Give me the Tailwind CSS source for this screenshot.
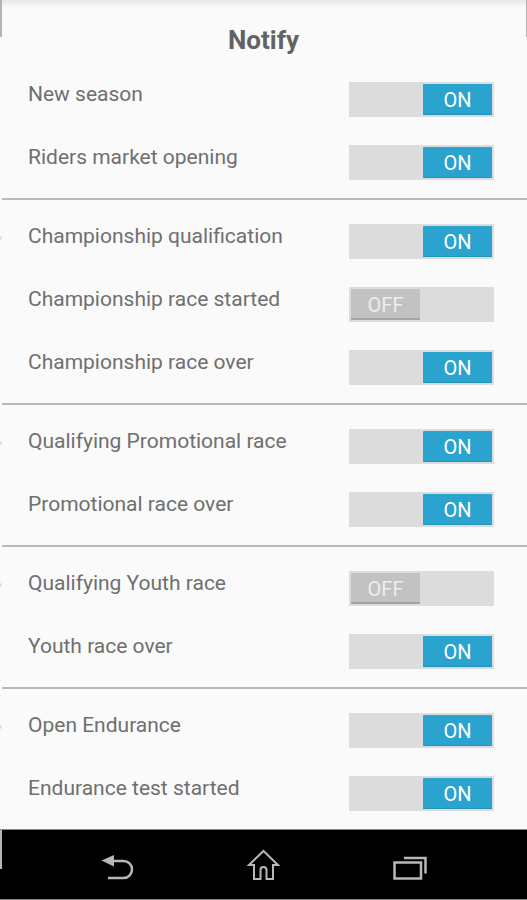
<!DOCTYPE html>
<html lang="en">
<head>
<meta charset="utf-8">
<meta name="viewport" content="width=device-width, initial-scale=1">
<title>Notify</title>
<script src="https://cdn.jsdelivr.net/npm/@tailwindcss/browser@4"></script>
</head>
<body class="bg-[#fafafa]">
<div class="relative flex min-h-screen flex-col bg-[#fafafa] font-['Roboto',sans-serif] text-[#6f6f6f]">
  <!-- device frame edges -->
  <div class="absolute inset-x-0 top-0 h-2 bg-linear-to-b from-[#e8e8e8] to-[#fafafa]"></div>
  <div class="absolute left-0 top-0 h-[37px] w-0.5 bg-[#b4b4b4]"></div>
  <div class="absolute right-0 top-0 h-[37px] w-px bg-[#b4b4b4]"></div>

  <main class="flex-1">
    <h1 class="pt-6 pb-0.5 text-center text-[26px] leading-8 font-bold text-[#636363]">Notify</h1>
    <div id="groups" class="divide-y-2 divide-[#b9b9b9] pl-0.5"></div>
  </main>

  <nav class="relative border-y border-[#8a8a8a] bg-black" aria-label="System">
    <div class="absolute left-0 top-0 h-[39px] w-0.5 bg-[#b4b4b4]"></div>
    <div class="flex h-[69px] items-center justify-center gap-[106px]">
      <button type="button" aria-label="Back" class="size-10">
        <svg viewBox="0 0 40 40" class="size-10" fill="none" stroke="#b8b8b8" stroke-width="2.5"><path d="M15 16H25.500a8.500 8.500 0 0 1 0 17H10"/><path d="M3.500 15.500L16 10V21.500Z" fill="#b8b8b8" stroke="none"/></svg>
      </button>
      <button type="button" aria-label="Home" class="size-10">
        <svg viewBox="0 0 40 40" class="size-10" fill="none" stroke="#b8b8b8" stroke-width="2"><path d="M19.500 6L34 20H29V34H22.500V25a3 3 0 0 0-6 0V34H10V20H5Z"/></svg>
      </button>
      <button type="button" aria-label="Recent apps" class="size-10">
        <svg viewBox="0 0 40 40" class="size-10" fill="none" stroke="#b8b8b8" stroke-width="2.5"><path d="M4.500 17.500H31V33.500H4.500Z"/><path d="M14 13H35.500V28.500"/></svg>
      </button>
    </div>
  </nav>
</div>

<template id="row">
  <label class="group flex cursor-pointer items-start justify-between">
    <span data-text class="text-[21px] leading-6"></span>
    <span class="relative flex h-[35px] w-[145px] shrink-0 bg-[#dcdcdc] p-0.5 text-[20px] text-white group-has-checked:justify-end">
      <input type="checkbox" role="switch" class="absolute inset-0 size-full cursor-pointer appearance-none">
      <span aria-hidden="true" class="hidden w-[69px] items-center justify-center rounded-[1px] border-b border-[#2192b8] bg-[#2aa3cf] pt-0.5 group-has-checked:flex">ON</span>
      <span aria-hidden="true" class="flex w-[69px] items-center justify-center rounded-[1px] border-b-2 border-[#a3a3a3] bg-[#c2c2c2] pt-0.5 text-[#eeeeee] group-has-checked:hidden">OFF</span>
    </span>
  </label>
</template>
<script>
const groups = [
  [['New season', true], ['Riders market opening', true]],
  [['Championship qualification', true], ['Championship race started', false], ['Championship race over', true]],
  [['Qualifying Promotional race', true], ['Promotional race over', true]],
  [['Qualifying Youth race', false], ['Youth race over', true]],
  [['Open Endurance', true], ['Endurance test started', true]],
];
const root = document.getElementById('groups');
const template = document.getElementById('row');
for (const rows of groups) {
  const section = document.createElement('section');
  section.className = 'relative flex flex-col gap-7 pt-6 pr-[33px] pb-[18px] pl-[26px] not-first:before:absolute not-first:before:top-9 not-first:before:-left-0.5 not-first:before:h-1 not-first:before:w-0.5 not-first:before:rounded-r-full not-first:before:bg-[#dddddd]';
  for (const [text, on] of rows) {
    const row = template.content.cloneNode(true);
    row.querySelector('[data-text]').textContent = text;
    row.querySelector('input').checked = on;
    section.append(row);
  }
  root.append(section);
}
</script>
</body>
</html>
